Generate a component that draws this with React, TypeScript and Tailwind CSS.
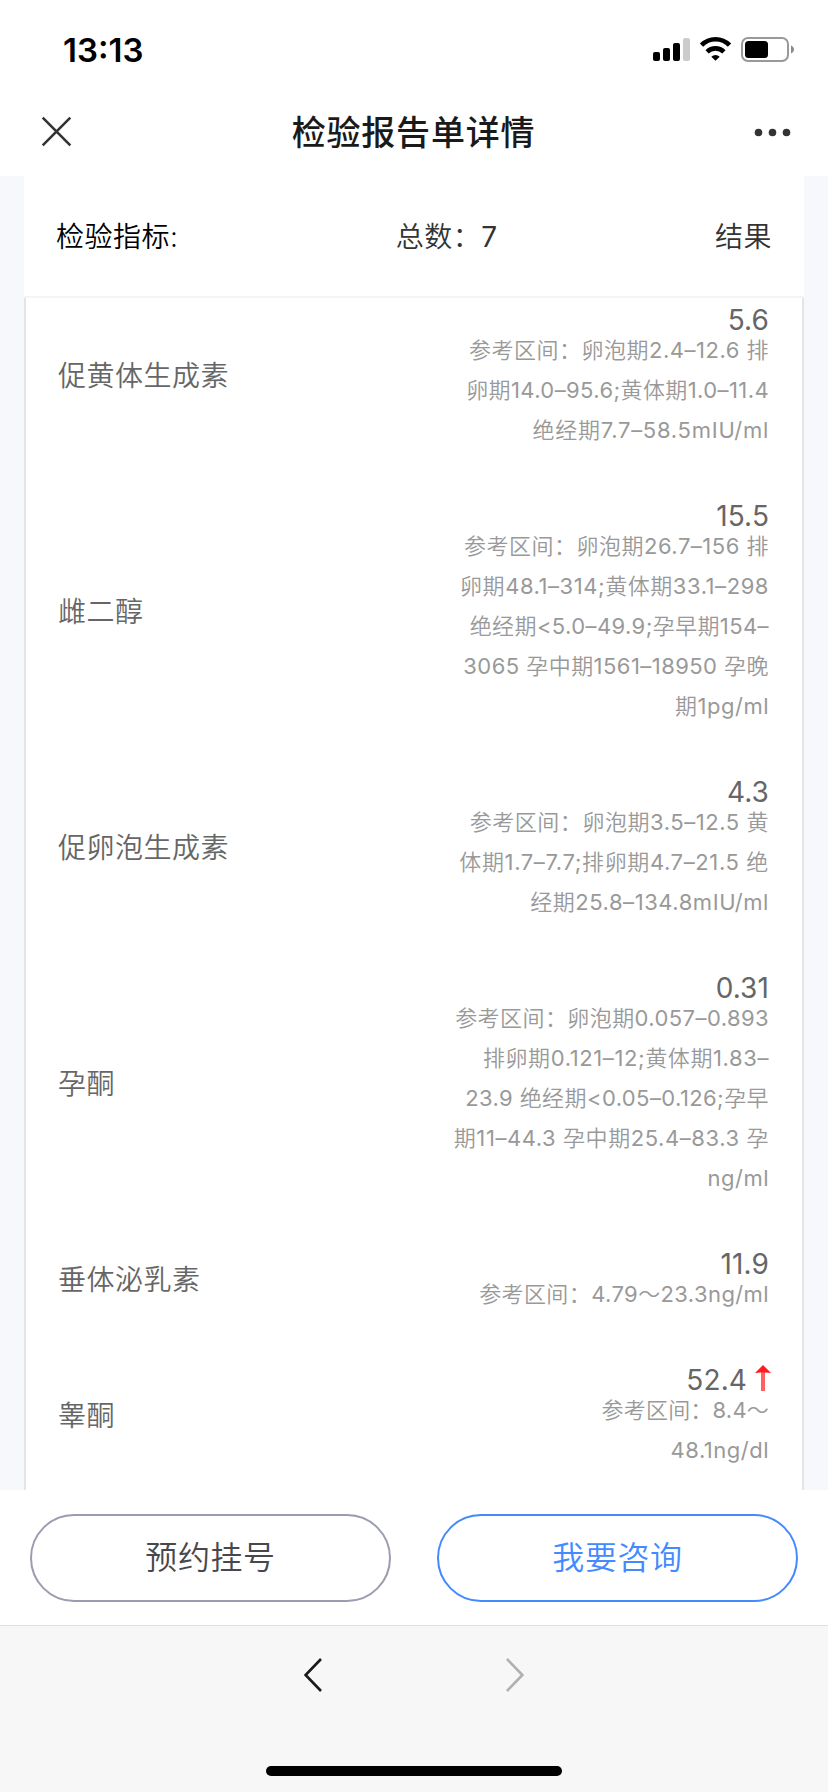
/**
 * Lab report detail page
 *
 * Mobile web view with status bar, indicator list and bottom actions.
 */

interface Indicator {
  name: string;
  value: string;
  /** Result is above the reference range */
  high?: boolean;
  /** Reference range, one entry per line */
  range: { text: string; tracking: string }[];
}

const indicators: Indicator[] = [
  {
    name: '促黄体生成素',
    value: '5.6',
    range: [
      { text: '参考区间：卵泡期2.4–12.6 排', tracking: 'tracking-[0.5px]' },
      { text: '卵期14.0–95.6;黄体期1.0–11.4', tracking: 'tracking-[0.4px]' },
      { text: '绝经期7.7–58.5mIU/ml', tracking: 'tracking-[0.74px]' },
    ],
  },
  {
    name: '雌二醇',
    value: '15.5',
    range: [
      { text: '参考区间：卵泡期26.7–156 排', tracking: 'tracking-[0.5px]' },
      { text: '卵期48.1–314;黄体期33.1–298', tracking: 'tracking-[0.55px]' },
      { text: '绝经期<5.0–49.9;孕早期154–', tracking: 'tracking-[0.4px]' },
      { text: '3065 孕中期1561–18950 孕晚', tracking: 'tracking-[0.45px]' },
      { text: '期1pg/ml', tracking: 'tracking-[0.5px]' },
    ],
  },
  {
    name: '促卵泡生成素',
    value: '4.3',
    range: [
      { text: '参考区间：卵泡期3.5–12.5 黄', tracking: 'tracking-[0.55px]' },
      { text: '体期1.7–7.7;排卵期4.7–21.5 绝', tracking: 'tracking-[0.62px]' },
      { text: '经期25.8–134.8mIU/ml', tracking: 'tracking-[0.55px]' },
    ],
  },
  {
    name: '孕酮',
    value: '0.31',
    range: [
      { text: '参考区间：卵泡期0.057–0.893', tracking: 'tracking-[0.42px]' },
      { text: '排卵期0.121–12;黄体期1.83–', tracking: 'tracking-[0.6px]' },
      { text: '23.9 绝经期<0.05–0.126;孕早', tracking: 'tracking-[0.41px]' },
      { text: '期11–44.3 孕中期25.4–83.3 孕', tracking: 'tracking-[0.57px]' },
      { text: 'ng/ml', tracking: 'tracking-[0.5px]' },
    ],
  },
  {
    name: '垂体泌乳素',
    value: '11.9',
    range: [{ text: '参考区间：4.79～23.3ng/ml', tracking: 'tracking-[0.4px]' }],
  },
  {
    name: '睾酮',
    value: '52.4',
    high: true,
    range: [
      { text: '参考区间：8.4～', tracking: 'tracking-[0.2px]' },
      { text: '48.1ng/dl', tracking: 'tracking-[0.5px]' },
    ],
  },
];

function StatusBar() {
  return (
    <div className="flex h-[88px] shrink-0 items-start justify-between pl-[63px] pr-[33px]">
      <span className="mt-[30px] text-[33px] font-semibold leading-[40px] text-black">13:13</span>
      <svg className="mt-[36px]" width="143" height="28" viewBox="652 36 143 28" fill="none">
        {/* Signal */}
        <rect x="653" y="52" width="7" height="9" rx="2" fill="#000" />
        <rect x="663" y="48" width="7" height="13" rx="2" fill="#000" />
        <rect x="673" y="43" width="7" height="18" rx="2" fill="#000" />
        <rect x="683" y="38" width="7" height="23" rx="2" fill="#ccc" />
        {/* Wifi */}
        <path d="M701.5 45.2 A19.5 19.5 0 0 1 729.5 45.2" stroke="#000" strokeWidth="4.6" />
        <path d="M707.1 51.8 A12 12 0 0 1 723.9 51.8" stroke="#000" strokeWidth="4.6" />
        <path d="M715.5 60.8 L711.3 56.8 A6 6 0 0 1 719.7 56.8 Z" fill="#000" />
        {/* Battery */}
        <rect x="742" y="38" width="46" height="23" rx="6" stroke="#999" strokeWidth="2" />
        <rect x="745" y="41" width="23" height="17" rx="3.5" fill="#000" />
        <path d="M791 45.5 C795 47 795 52 791 53.5 Z" fill="#8c8c8c" />
      </svg>
    </div>
  );
}

function NavBar() {
  return (
    <div className="flex h-[88px] shrink-0 items-center justify-between pl-[41px] pr-[37px]">
      <svg className="-mt-px" width="31" height="31" viewBox="0 0 31 31" stroke="#333" strokeWidth="2.6">
        <path d="M1.7 1.7 L29.3 29.3 M29.3 1.7 L1.7 29.3" />
      </svg>
      <h1 className="pl-px pt-[2px] font-['Inter','Noto_Sans_CJK_SC',sans-serif] text-[34px] font-medium leading-[48px] tracking-[0.8px] text-[#1a1a1a]">
        检验报告单详情
      </h1>
      <svg width="37" height="9" viewBox="0 0 37 9" fill="#333">
        <circle cx="4.5" cy="4.5" r="3.8" />
        <circle cx="18.5" cy="4.5" r="3.8" />
        <circle cx="32.5" cy="4.5" r="3.8" />
      </svg>
    </div>
  );
}

function HighArrow() {
  return (
    <svg className="-mr-[2px] ml-[8px] mt-[5px]" width="16" height="26" viewBox="0 0 16 26">
      <rect x="6" y="6" width="4" height="20" fill="#ff6060" />
      <path d="M8 0 L16 8 L10 7.5 H6 L0 8 Z" fill="#ff1d1d" />
    </svg>
  );
}

function IndicatorRow({ item }: { item: Indicator }) {
  return (
    <div className="flex items-center justify-between">
      <span className="pt-[2px] text-[28px] font-[350] leading-[40px] tracking-[0.5px] text-[#666]">
        {item.name}
      </span>
      <div className="flex flex-col items-end">
        <div className="flex h-[30px] text-[28px] leading-[41px] tracking-[0.1px] text-[#666]">
          {item.value}
          {item.high && <HighArrow />}
        </div>
        {item.range.map((line) => (
          <p
            key={line.text}
            className={`whitespace-nowrap text-[22px] leading-[40px] text-[#999] ${line.tracking}`}
          >
            {line.text}
          </p>
        ))}
      </div>
    </div>
  );
}

export default function App() {
  return (
    <div className="flex h-[1792px] w-[828px] flex-col overflow-hidden bg-white font-['Inter','Noto_Sans_CJK_SC_DemiLight','Noto_Sans_CJK_SC',sans-serif]">
      <StatusBar />
      <NavBar />

      {/* Report */}
      <main className="flex h-[1314px] shrink-0 flex-col overflow-hidden bg-[#f7f8fc] px-6">
        <div className="flex h-[122px] shrink-0 items-center justify-between border-b-2 border-[#f4f4f4] bg-white pl-8 pr-8 pt-[2px] text-[28px] font-[350] tracking-[0.5px] text-[#333]">
          <span className="text-black">检验指标:</span>
          <span>
            总数：<span className="font-normal">7</span>
          </span>
          <span>结果</span>
        </div>
        <div className="flex flex-1 flex-col gap-[46px] border-x-2 border-[#e5e5e7] bg-white pl-8 pr-[33px] pt-[2px]">
          {indicators.map((item) => (
            <IndicatorRow key={item.name} item={item} />
          ))}
        </div>
      </main>

      {/* Actions */}
      <div className="flex h-[135px] shrink-0 gap-[46px] px-[30px] pt-6 text-[32px] font-[350] tracking-[0.6px]">
        <button className="h-[88px] flex-1 rounded-full border-2 border-[#9a9cb0] text-[#47474d]">
          预约挂号
        </button>
        <button className="h-[88px] flex-1 rounded-full border-2 border-[#438aff] text-[#438aff]">
          我要咨询
        </button>
      </div>

      {/* Browser toolbar */}
      <footer className="flex flex-1 flex-col items-center justify-between border-t border-[#e0e0e0] bg-[#f7f7f7] pb-4 pt-8">
        <div className="flex w-[220px] justify-between">
          <svg width="18" height="34" viewBox="0 0 18 34" fill="none" stroke="#1a1a1a" strokeWidth="2.6">
            <path d="M17 1 L1.6 17 L17 33" />
          </svg>
          <svg width="18" height="34" viewBox="0 0 18 34" fill="none" stroke="#b0b0b0" strokeWidth="2.6">
            <path d="M1 1 L16.4 17 L1 33" />
          </svg>
        </div>
        <div className="h-[10px] w-[296px] rounded-full bg-black" />
      </footer>
    </div>
  );
}
